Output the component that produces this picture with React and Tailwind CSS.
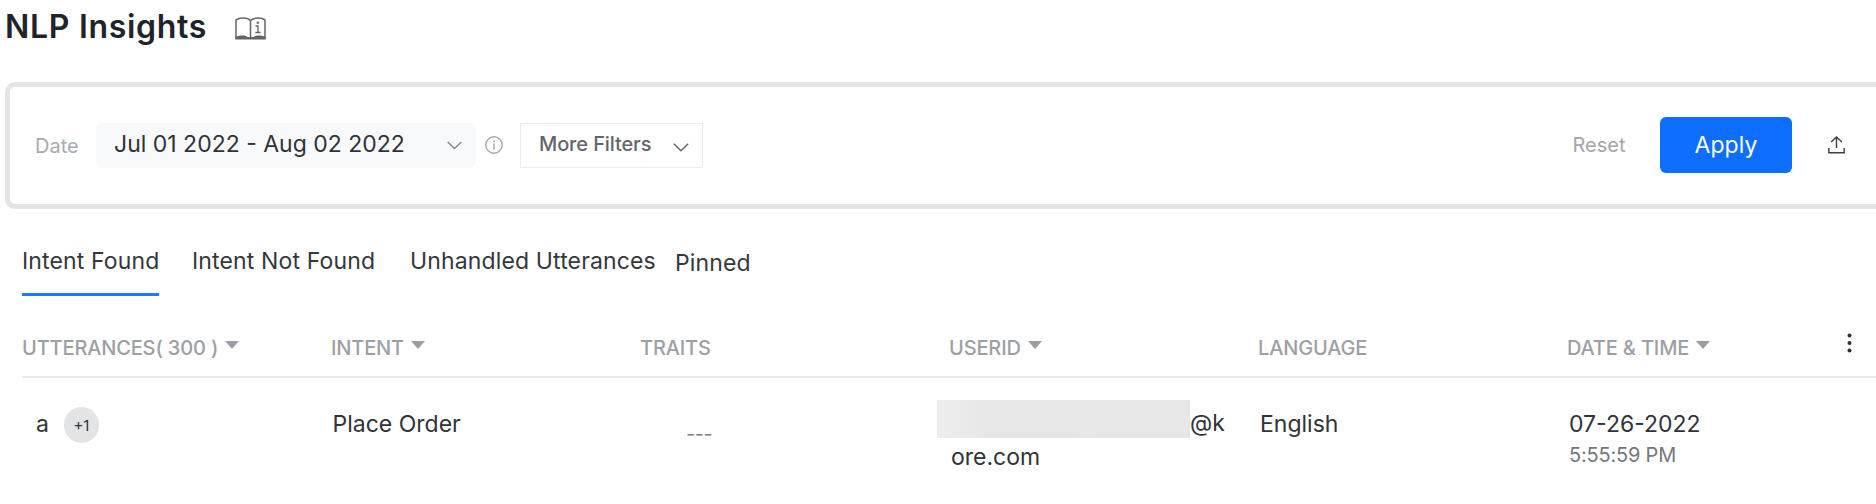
import React from "react";

const columns = [
  { label: "UTTERANCES( 300 )", sortable: true },
  { label: "INTENT", sortable: true },
  { label: "TRAITS", sortable: false },
  { label: "USERID", sortable: true },
  { label: "LANGUAGE", sortable: false },
  { label: "DATE & TIME", sortable: true },
];

function BookIcon() {
  return (
    <svg className="mt-[17px] h-[23px] w-[31px]" viewBox="0 0 31 23" fill="none" stroke="#63656b">
      <path d="M1 21V2.800C4 .6 12 .2 15.500 3.500C19 .2 27 .6 30 2.800V21" strokeWidth="1.500" />
      <path d="M15.500 3.500V20" strokeWidth="1.500" />
      <path d="M.2 22.500V20C3 18.300 10 17.500 12.500 20H18.500C21 17.500 28 18.300 30.800 20V22.500Z" fill="#63656b" stroke="none" />
      <path d="M20.500 9H23V15.500M20.300 15.500H25.500" strokeWidth="1.300" />
      <circle cx="22.800" cy="5.800" r="1.200" fill="#63656b" stroke="none" />
    </svg>
  );
}

function Chevron({ className }) {
  return (
    <svg className={className} viewBox="0 0 16 9" fill="none" stroke="currentColor" strokeWidth="1.500">
      <path d="M.8 .8L8 7.800L15.200 .8" />
    </svg>
  );
}

function InfoIcon() {
  return (
    <svg className="ml-[9px] mt-[54px] h-[18px] w-[18px]" viewBox="0 0 18 18" fill="none" stroke="#a5a7ad">
      <circle cx="9" cy="9" r="8.200" strokeWidth="1.400" />
      <path d="M9 7.600V13.500" strokeWidth="1.500" />
      <path d="M9 4.500V6.200" strokeWidth="1.500" />
    </svg>
  );
}

function ExportIcon() {
  return (
    <svg className="ml-9 mt-[54px] h-[18px] w-[17px]" viewBox="0 0 17 18" fill="none" stroke="#3c3f45" strokeWidth="1.400">
      <path d="M.8 12V16.800H16.200V12" />
      <path d="M8.500 12V1M3.200 6L8.500 1L13.800 6" />
    </svg>
  );
}

function FilterPanel() {
  return (
    <section className="-mr-3 ml-[5px] flex h-[127px] items-start rounded-[10px] border-[5px] border-[#e3e4e6] bg-white">
      <div className="-mt-[5px] flex">
        <span className="ml-[25px] mt-[51px] w-[61px] text-[20px] leading-[26px] text-[#a9abb1]">Date</span>
        <button className="mt-[41px] flex h-[45px] w-[380px] items-start justify-between rounded-[6px] bg-[#f8f9fb] pl-[18px] pr-[14px] text-left text-[#2f3237]">
          <span className="mt-[7px] whitespace-nowrap text-[23px] leading-[28px]">Jul 01 2022 - Aug 02 2022</span>
          <Chevron className="mt-[18px] h-[9px] w-[15px] text-[#85878e]" />
        </button>
        <InfoIcon />
        <button className="ml-[17px] mt-[41px] flex h-[45px] w-[183px] items-start justify-between border border-[#ebecee] pl-[18px] pr-[13px] text-[#63656b]">
          <span className="mt-[7px] whitespace-nowrap text-[20px] font-medium leading-[26px] tracking-[-0.12px]">More Filters</span>
          <Chevron className="mt-[19px] h-[9px] w-[16px]" />
        </button>
      </div>
      <div className="-mt-[5px] ml-auto mr-[38px] flex">
        <button className="mt-[50px] h-[26px] w-[54px] text-[20px] leading-[26px] text-[#a3a5aa]">Reset</button>
        <button className="ml-[34px] mt-[35px] h-[56px] w-[132px] rounded-[6px] bg-[#0d6eff] pt-px text-[23px] tracking-[0.1px] text-white">Apply</button>
        <ExportIcon />
      </div>
    </section>
  );
}

function Tabs() {
  return (
    <nav className="ml-[22px] mt-[37px] flex h-[50px] whitespace-nowrap text-[23px] leading-[30px] tracking-[0.14px] text-[#34373c]">
      <span className="w-[137px] border-b-[3px] border-[#1f78ff]">Intent Found</span>
      <span className="ml-[33px] w-[218px]">Intent Not Found</span>
      <span className="w-[265px]">Unhandled Utterances</span>
      <span className="mt-[2px]">Pinned</span>
    </nav>
  );
}

function HeaderRow() {
  return (
    <div className="ml-[22px] mt-[29px] flex h-[53px] border-b-2 border-[#e8e9ea]">
      <div className="grid shrink-0 grid-cols-[repeat(6,309px)]">
        {columns.map((c) => (
          <div key={c.label} className="flex items-start whitespace-nowrap text-[20px] font-medium leading-[26px] tracking-[-0.15px] text-[#9c9fa5]">
            <span className="mt-[10px]">{c.label}</span>
            {c.sortable && (
              <svg className="ml-[7px] mt-[16px] h-[8px] w-[14px]" viewBox="0 0 14 8">
                <path d="M0 0H14L7 8Z" fill="#9a9da3" />
              </svg>
            )}
          </div>
        ))}
      </div>
      <svg className="-ml-[29px] mt-[8px] h-[20px] w-[5px] shrink-0" viewBox="0 0 5 20" fill="#2c2f34">
        <circle cx="2.500" cy="2.500" r="2" />
        <circle cx="2.500" cy="10" r="2" />
        <circle cx="2.500" cy="17.500" r="2" />
      </svg>
    </div>
  );
}

function DataRow() {
  return (
    <div className="ml-[22px] grid grid-cols-[repeat(6,309px)] pt-[28px] text-[23px] leading-[34px] text-[#303338]">
      <div className="flex items-start pl-[14px]">
        <span className="mt-px">a</span>
        <span className="ml-[15px] mt-px flex h-[36px] w-[35px] items-center justify-center rounded-full bg-[#e3e4e6] pt-px text-[15px]">+1</span>
      </div>
      <div className="mt-px pl-[1.500px]">Place Order</div>
      <div className="pl-[46px] pt-[11px] text-[20px] tracking-[-0.5px] text-[#85878c]">---</div>
      <div className="-mt-[6px] -ml-3">
        <div className="flex items-start">
          <span className="h-[38px] w-[253px] bg-linear-to-r from-[#ededed] via-[#e6e6e6] via-25% to-[#e7e7e7]" />
          <span className="mt-[7px] leading-[33px]">@k</span>
        </div>
        <div className="pl-[14px] leading-[34px]">ore.com</div>
      </div>
      <div className="mt-px pl-[2px]">English</div>
      <div className="mt-px pl-[2px]">
        <div>07-26-2022</div>
        <div className="text-[20px] leading-[28px] tracking-[-0.2px] text-[#75777d]">5:55:59 PM</div>
      </div>
    </div>
  );
}

export default function App() {
  return (
    <main className="h-[504px] w-full overflow-hidden bg-white font-['Inter',sans-serif]">
      <header className="flex h-[82px] items-start pl-[5px]">
        <h1 className="mt-[7px] w-[230px] whitespace-nowrap text-[32px] font-[560] leading-[40px] tracking-[0.7px] text-[#202329]">NLP Insights</h1>
        <BookIcon />
      </header>
      <FilterPanel />
      <Tabs />
      <HeaderRow />
      <DataRow />
    </main>
  );
}
